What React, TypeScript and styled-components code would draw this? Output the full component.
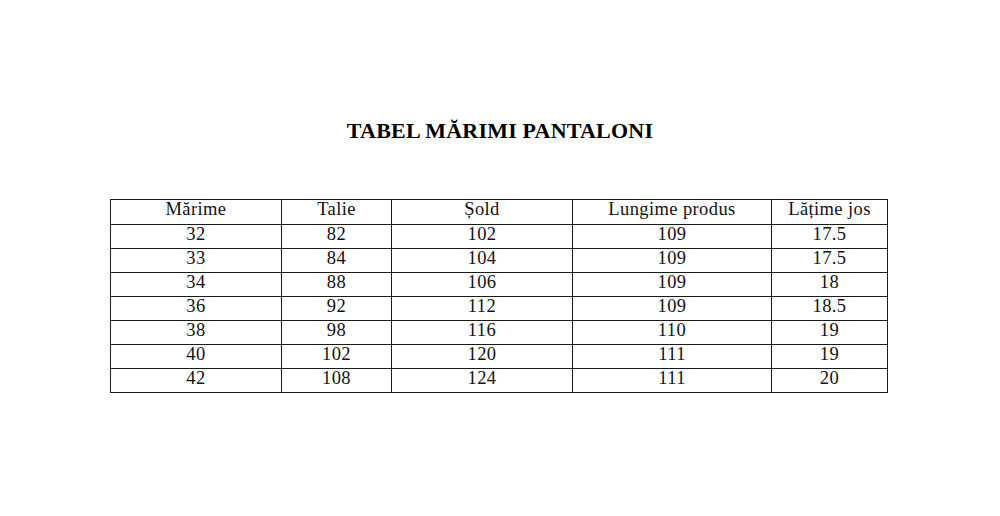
import styled, { createGlobalStyle } from 'styled-components';

const GlobalStyle = createGlobalStyle`
  html, body {
    margin: 0;
    padding: 0;
    background: #ffffff;
  }
  body {
    font-family: "Liberation Serif", "Times New Roman", serif;
    color: #000;
  }
`;

// Whole page
const Page = styled.div`
  width: 1000px;
  height: 516px;
  padding-top: 120px;
  box-sizing: border-box;
  background: #fff;
`;

// Bold heading above the table
const Title = styled.h1`
  margin: 0 0 57px;
  text-align: center;
  font-size: 22px;
  line-height: 22px;
  letter-spacing: 0.2px;
  font-weight: bold;
  color: #000;
`;

// Size chart grid
const SizeTable = styled.table`
  margin-left: 110px;
  width: 777px;
  border-collapse: collapse;
  table-layout: fixed;
  font-size: 18.5px;
`;

const Row = styled.tr<{ $h?: number }>`
  height: ${({ $h }) => $h ?? 24}px;
`;

// Header and body cells share the same look (no bold in the header)
const Cell = styled.td<{ $w?: number }>`
  ${({ $w }) => ($w ? `width: ${$w}px;` : '')}
  border: 1px solid #1a1a1a;
  padding: 0;
  line-height: 18px;
  letter-spacing: 0.4px;
  text-align: center;
  vertical-align: top;
  font-weight: normal;
  color: #111;
  box-sizing: border-box;
`;

const columns = [
  { label: 'Mărime', width: 171 },
  { label: 'Talie', width: 110 },
  { label: 'Șold', width: 181 },
  { label: 'Lungime produs', width: 199 },
  { label: 'Lățime jos', width: 116 },
];

const rows = [
  ['32', '82', '102', '109', '17.5'],
  ['33', '84', '104', '109', '17.5'],
  ['34', '88', '106', '109', '18'],
  ['36', '92', '112', '109', '18.5'],
  ['38', '98', '116', '110', '19'],
  ['40', '102', '120', '111', '19'],
  ['42', '108', '124', '111', '20'],
];

const App = () => {
  return (
    <Page>
      <GlobalStyle />
      <Title>TABEL MĂRIMI PANTALONI</Title>
      <SizeTable>
        <thead>
          <Row $h={25}>
            {columns.map((c) => (
              <Cell as="th" key={c.label} $w={c.width}>
                {c.label}
              </Cell>
            ))}
          </Row>
        </thead>
        <tbody>
          {rows.map((r) => (
            <Row key={r[0]}>
              {r.map((v, i) => (
                <Cell key={i}>{v}</Cell>
              ))}
            </Row>
          ))}
        </tbody>
      </SizeTable>
    </Page>
  );
};

export default App;
